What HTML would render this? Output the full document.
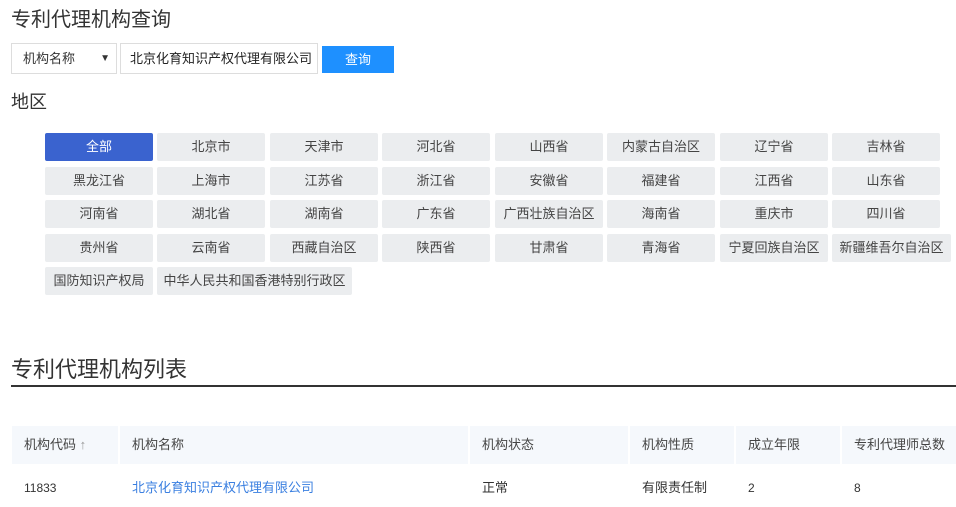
<!DOCTYPE html>
<html><head><meta charset="utf-8"><style>
body{margin:0;width:956px;height:507px;overflow:hidden;background:#fff;font-family:"Liberation Sans","Noto Sans CJK SC",sans-serif;color:#333;position:relative}
.a{position:absolute;white-space:nowrap}
.b{position:absolute;height:28px;line-height:28px;text-align:center;font-size:13px;background:#ebedef;color:#444;border-radius:2px;width:108px}
.th{position:absolute;top:426px;height:38px;line-height:38px;background:#f5f8fc;font-size:13px;color:#444;padding-left:12px;box-sizing:border-box}
.td{position:absolute;top:478px;line-height:20px;font-size:13px;color:#333}
</style></head><body>
<div class="a" style="left:11px;top:6px;font-size:20px;line-height:28px;color:#333">专利代理机构查询</div>
<div class="a" style="left:11px;top:43px;width:106px;height:31px;border:1px solid #ddd;box-sizing:border-box;font-size:13px;line-height:29px;padding-left:11px">机构名称<span style="position:absolute;right:6px;font-size:10px">▼</span></div>
<div class="a" style="left:120px;top:43px;width:198px;height:31px;border:1px solid #ddd;box-sizing:border-box;font-size:13px;line-height:29px;padding-left:9px;color:#222">北京化育知识产权代理有限公司</div>
<div class="a" style="left:322px;top:46px;width:72px;height:27px;background:#1e90ff;color:#fff;font-size:13px;line-height:27px;text-align:center">查询</div>
<div class="a" style="left:11px;top:89px;font-size:18px;line-height:26px">地区</div>
<div class="b" style="left:45px;top:133px;background:#3a63cf;color:#fff">全部</div>
<div class="b" style="left:157px;top:133px">北京市</div>
<div class="b" style="left:270px;top:133px">天津市</div>
<div class="b" style="left:382px;top:133px">河北省</div>
<div class="b" style="left:495px;top:133px">山西省</div>
<div class="b" style="left:607px;top:133px">内蒙古自治区</div>
<div class="b" style="left:720px;top:133px">辽宁省</div>
<div class="b" style="left:832px;top:133px">吉林省</div>
<div class="b" style="left:45px;top:167px">黑龙江省</div>
<div class="b" style="left:157px;top:167px">上海市</div>
<div class="b" style="left:270px;top:167px">江苏省</div>
<div class="b" style="left:382px;top:167px">浙江省</div>
<div class="b" style="left:495px;top:167px">安徽省</div>
<div class="b" style="left:607px;top:167px">福建省</div>
<div class="b" style="left:720px;top:167px">江西省</div>
<div class="b" style="left:832px;top:167px">山东省</div>
<div class="b" style="left:45px;top:200px">河南省</div>
<div class="b" style="left:157px;top:200px">湖北省</div>
<div class="b" style="left:270px;top:200px">湖南省</div>
<div class="b" style="left:382px;top:200px">广东省</div>
<div class="b" style="left:495px;top:200px">广西壮族自治区</div>
<div class="b" style="left:607px;top:200px">海南省</div>
<div class="b" style="left:720px;top:200px">重庆市</div>
<div class="b" style="left:832px;top:200px">四川省</div>
<div class="b" style="left:45px;top:234px">贵州省</div>
<div class="b" style="left:157px;top:234px">云南省</div>
<div class="b" style="left:270px;top:234px">西藏自治区</div>
<div class="b" style="left:382px;top:234px">陕西省</div>
<div class="b" style="left:495px;top:234px">甘肃省</div>
<div class="b" style="left:607px;top:234px">青海省</div>
<div class="b" style="left:720px;top:234px">宁夏回族自治区</div>
<div class="b" style="left:832px;top:234px;width:119px">新疆维吾尔自治区</div>
<div class="b" style="left:45px;top:267px">国防知识产权局</div>
<div class="b" style="left:157px;top:267px;width:195px">中华人民共和国香港特别行政区</div>
<div class="a" style="left:11px;top:355px;font-size:22px;line-height:30px;color:#333">专利代理机构列表</div>
<div class="a" style="left:11px;top:385px;width:945px;height:2px;background:#333"></div>
<div class="th" style="left:12px;width:106px">机构代码 <span style="color:#999">↑</span></div>
<div class="th" style="left:120px;width:348px">机构名称</div>
<div class="th" style="left:470px;width:158px">机构状态</div>
<div class="th" style="left:630px;width:104px">机构性质</div>
<div class="th" style="left:736px;width:104px">成立年限</div>
<div class="th" style="left:842px;width:114px">专利代理师总数</div>
<div class="td" style="left:24px;font-size:12px">11833</div>
<div class="td" style="left:132px;color:#3a7fe0">北京化育知识产权代理有限公司</div>
<div class="td" style="left:482px">正常</div>
<div class="td" style="left:642px">有限责任制</div>
<div class="td" style="left:748px;font-size:12px">2</div>
<div class="td" style="left:854px;font-size:12px">8</div>
</body></html>
